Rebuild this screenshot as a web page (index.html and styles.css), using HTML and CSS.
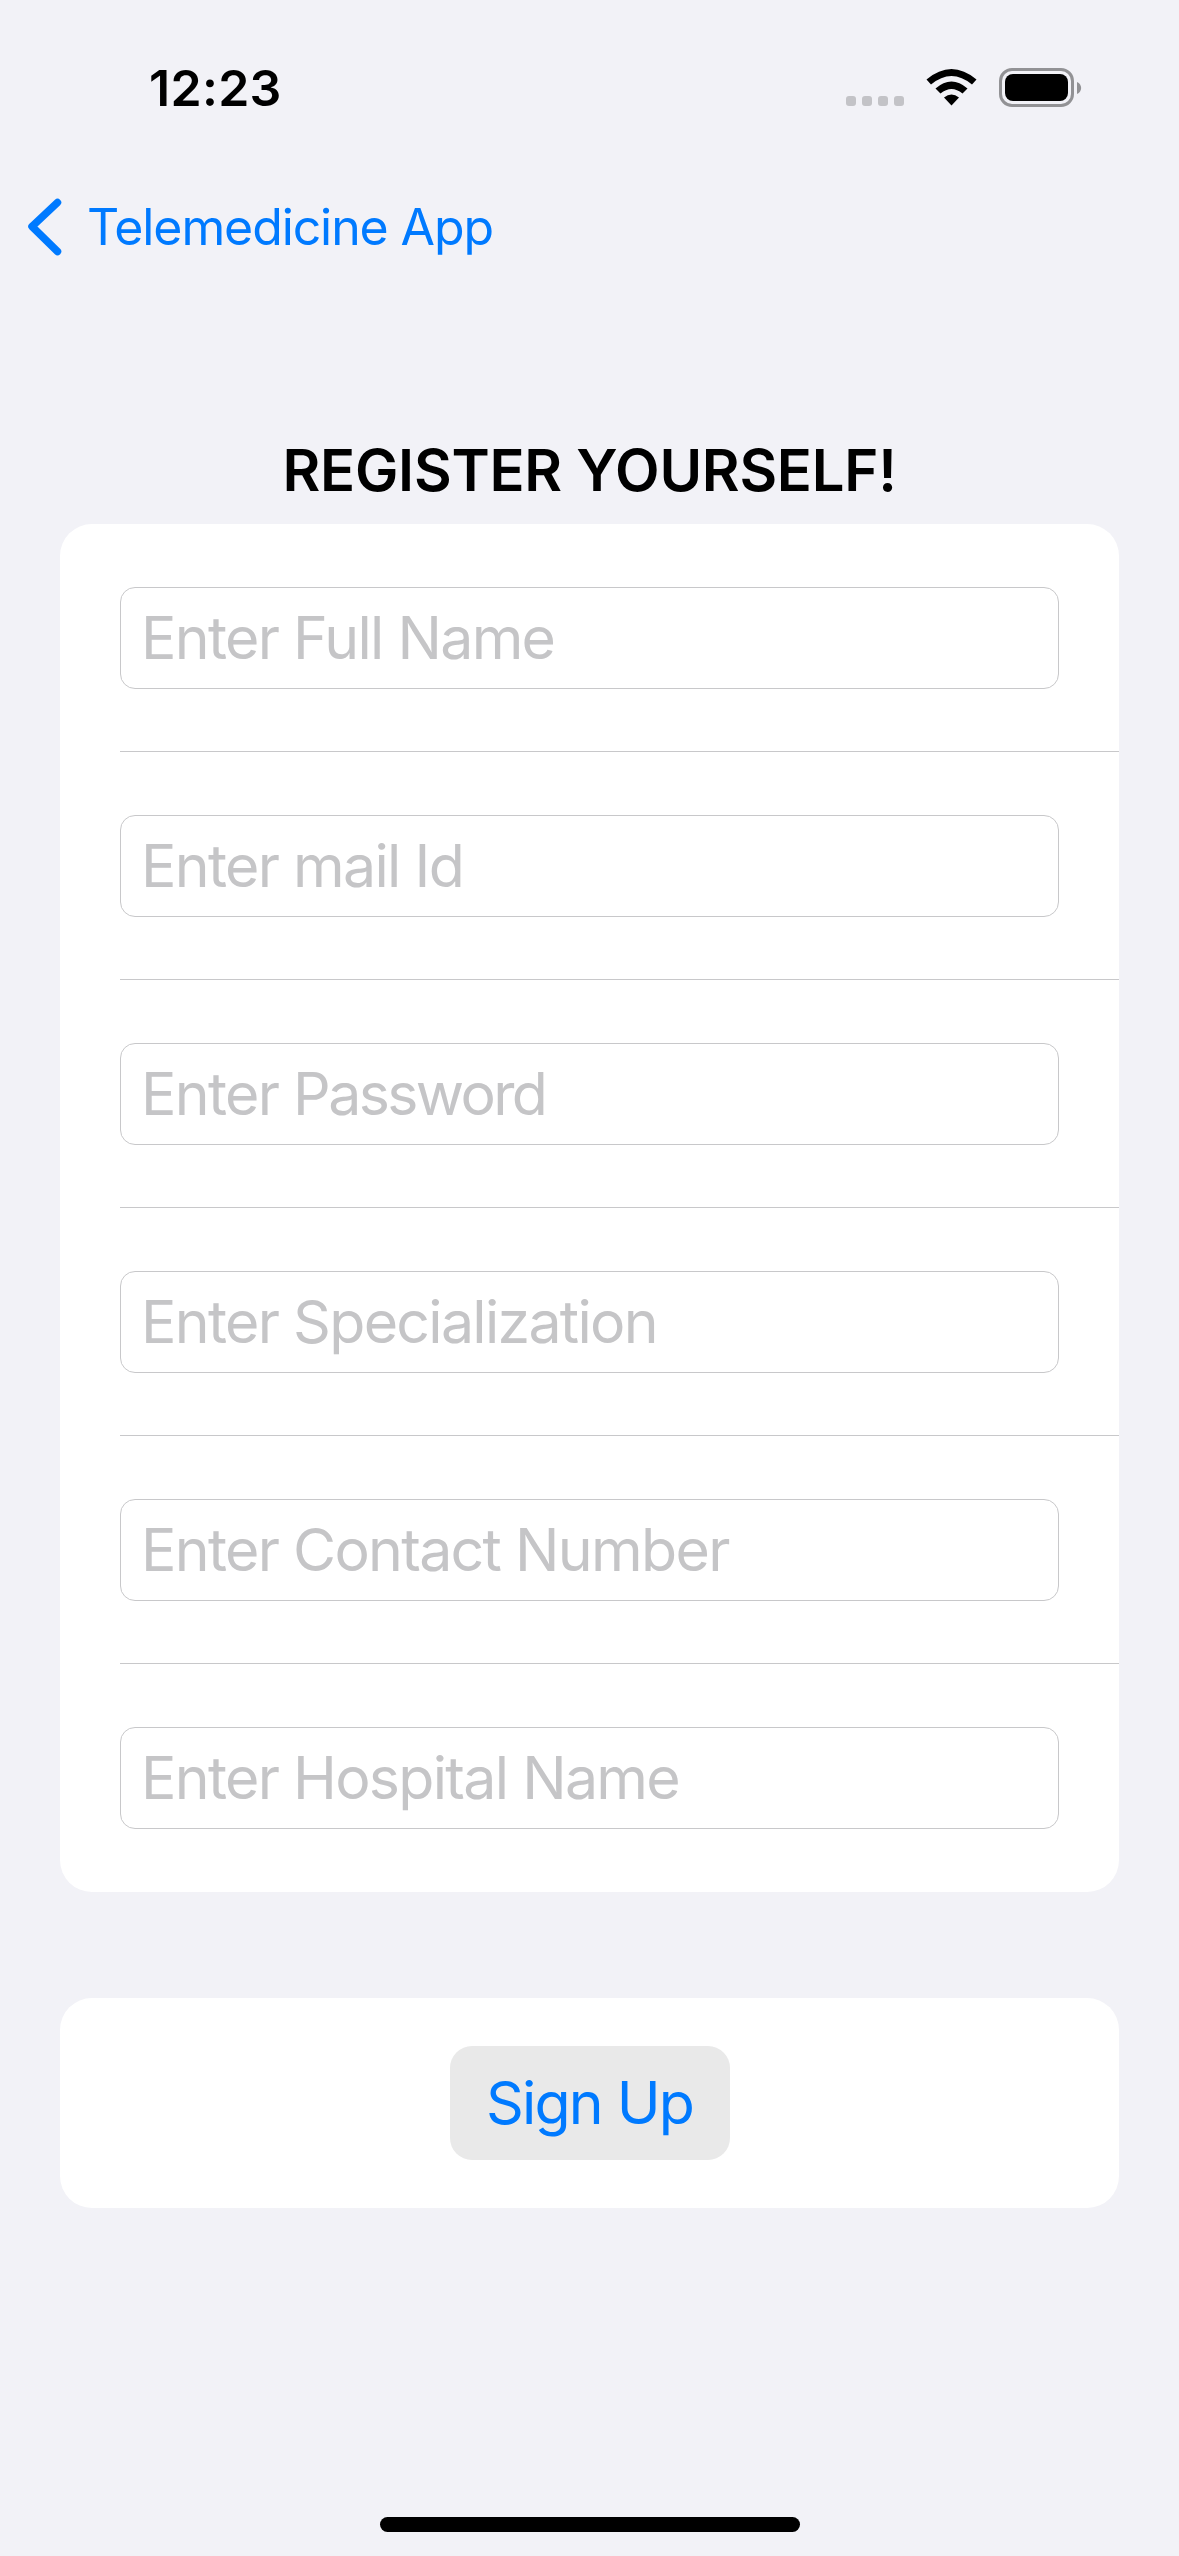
FILE: index.html
```html
<!DOCTYPE html>
<html lang="en">
<head>
<meta charset="utf-8">
<title>Register</title>
<link rel="stylesheet" href="styles.css">
</head>
<body>
<div class="screen">
  <header class="status">
    <span class="time">12:23</span>
    <svg class="indicators" viewBox="0 0 240 42" width="240" height="42">
      <g fill="#c3c3c7"><rect x="0" y="28" width="10" height="10" rx="3"/><rect x="16" y="28" width="10" height="10" rx="3"/><rect x="32" y="28" width="10" height="10" rx="3"/><rect x="48" y="28" width="10" height="10" rx="3"/></g>
      <path d="M80.500 11.500L85 16.500Q105.500 -.5 126 16.500L130.500 11.500Q105.500 -9.500 80.500 11.500ZM89.500 20.500L94.500 25.500Q105.500 16.500 116.500 25.500L121.500 20.500Q105.500 6.500 89.500 20.500ZM98 29.500L105.500 37.500L113 29.500Q105.500 23.500 98 29.500Z"/>
      <rect x="154.500" y="1.500" width="72" height="36" rx="11.500" fill="none" stroke="#929295" stroke-width="3"/>
      <rect x="159" y="6" width="63" height="27" rx="8"/>
      <path d="M231 14C236.500 16 236.500 24 231 26Z" fill="#929295"/>
    </svg>
  </header>
  <nav class="nav">
    <svg class="chevron" viewBox="0 0 34 58" width="34" height="58"><path d="M29.500 4.500L4 28.500L29.500 53.500" fill="none" stroke="#007aff" stroke-width="7.500" stroke-linecap="round" stroke-linejoin="round"/></svg>
    <span class="back">Telemedicine App</span>
  </nav>
  <h1 class="heading">REGISTER YOURSELF!</h1>
  <main class="card">
    <div class="row"><div class="field">Enter Full Name</div></div>
    <div class="row"><div class="field">Enter mail Id</div></div>
    <div class="row"><div class="field">Enter <span class="password">Password</span></div></div>
    <div class="row"><div class="field">Enter Specialization</div></div>
    <div class="row"><div class="field">Enter Contact Number</div></div>
    <div class="row"><div class="field">Enter Hospital Name</div></div>
  </main>
  <section class="card actions"><button class="signup">Sign Up</button></section>
  <div class="home"></div>
</div>
</body>
</html>
```
FILE: styles.css
```css
* { box-sizing: border-box; }
body { margin: 0; background: #f2f2f7; font-family: Inter, "Liberation Sans", sans-serif; }
.screen { width: 1179px; height: 2556px; display: flex; flex-direction: column; align-items: center; }
.status { width: 100%; height: 176px; padding: 58px 94px 0 149px; display: flex; justify-content: space-between; align-items: flex-start; }
.time { font-size: 50px; font-weight: 600; line-height: 60px; letter-spacing: 0.3px; }
.indicators { margin: 10px -1px 0 0; }
.nav { width: 100%; height: 100px; padding-left: 27.500px; display: flex; align-items: center; color: #007aff; }
.chevron { margin-top: 1px; }
.back { margin: 1px 0 0 25.500px; font-size: 50px; line-height: 60px; letter-spacing: -1.100px; }
.heading { margin: 160px 0 0; height: 88px; font-size: 58px; font-weight: 600; line-height: 68px; letter-spacing: -0.250px; white-space: nowrap; }
.card { width: 1059px; background: #fff; border-radius: 32px; }
.row { height: 228px; margin-left: 60px; padding: 63px 60px 0 0; border-bottom: 1px solid #c8c8ca; }
.row:last-child { border-bottom: 0; }
.field { height: 102px; padding-left: 20px; border: 1px solid #c8c8ca; border-radius: 15px; color: #c5c5c7; font-size: 59px; line-height: 99px; letter-spacing: -1.700px; white-space: nowrap; }
.password { letter-spacing: -2.600px; }
.actions { height: 210px; margin-top: 106px; display: flex; justify-content: center; align-items: center; }
.signup { width: 280px; height: 114px; padding: 0; border: 0; border-radius: 22px; background: #e9e9e9; color: #007aff; font: 59px/114px Inter, sans-serif; letter-spacing: -1.800px; white-space: nowrap; }
.home { width: 420px; height: 15px; margin: auto 0 24px; border-radius: 8px; background: #000; }
```
